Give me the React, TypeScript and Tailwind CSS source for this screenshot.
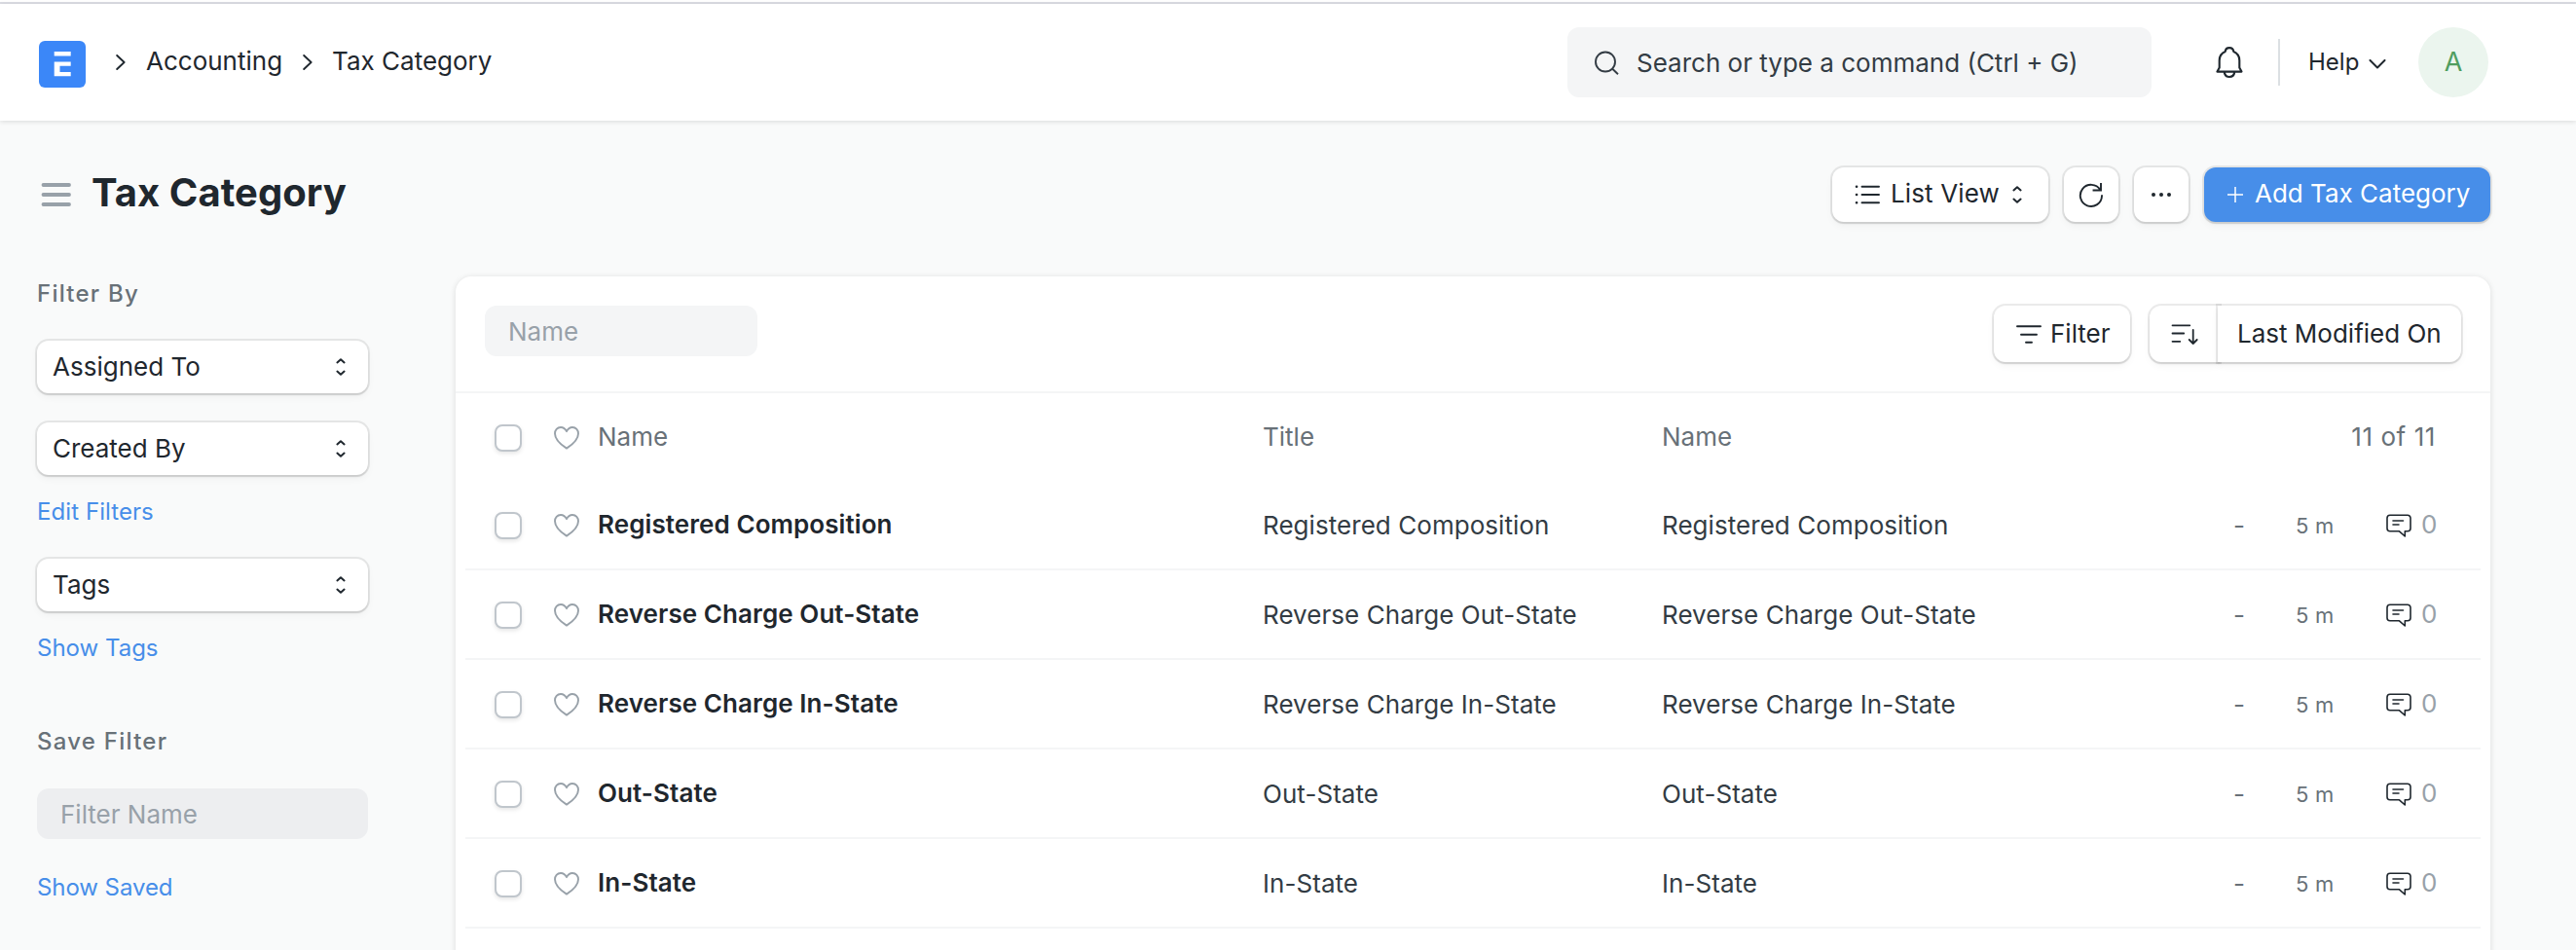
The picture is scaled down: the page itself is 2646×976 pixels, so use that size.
import React from "react";

const ring = "shadow-[0_0_0_2px_rgba(0,0,0,0.08),0_2px_2px_rgba(0,0,0,0.09),0_4px_8px_rgba(0,0,0,0.04)]";

function UpDown() {
  return (
    <svg width="32" height="32" viewBox="0 0 16 16" fill="none" stroke="#1f272e" strokeLinecap="round" strokeLinejoin="round">
      <path d="M6.2 5.700 8 4.100l1.800 1.600M6.200 10.300 8 11.900l1.800-1.600" />
    </svg>
  );
}

function Chevron() {
  return (
    <svg width="10" height="16" viewBox="0 0 10 16" fill="none" stroke="#1f272e" strokeWidth="1.900" strokeLinecap="round" strokeLinejoin="round">
      <path d="m1.200 1 7.400 7-7.400 7" />
    </svg>
  );
}

function Heart() {
  return (
    <svg className="mt-0.5" width="28" height="26" viewBox="0 0 28 26" fill="none" stroke="#98a1a9" strokeWidth="1.900" strokeLinejoin="round">
      <path d="M14 6.200C12.600 3.400 10.600 2 8 2 4.400 2 2 4.700 2 8.400c0 6.600 5.600 11 12 15.200 6.400-4.200 12-8.600 12-15.200C26 4.700 23.600 2 20 2c-2.600 0-4.600 1.400-6 4.200Z" />
    </svg>
  );
}

function Comment() {
  return (
    <svg className="mt-0.5" width="28" height="26" viewBox="0 0 28 26" fill="none" stroke="#1f272e" strokeWidth="1.600" strokeLinecap="round" strokeLinejoin="round">
      <path d="M5 2.300h18a3 3 0 0 1 3 3v10.500a3 3 0 0 1-3 3h-2.700v5.200l-5.800-5.200H5a3 3 0 0 1-3-3V5.300a3 3 0 0 1 3-3Z" />
      <path d="M8 8h10.500M8 12h6" />
    </svg>
  );
}

function Check() {
  return <span className="mt-0.5 block size-7 rounded-lg border-2 border-[#c0c6cc] bg-white shadow-[0_2px_4px_rgba(0,0,0,0.1)]" />;
}

function Select({ label }: { label: string }) {
  return (
    <button className={"flex h-[54px] w-[340px] items-center justify-between rounded-xl bg-white pl-4 pr-3 text-[#1f272e] " + ring}>
      <span>{label}</span>
      <UpDown />
    </button>
  );
}

const rows = ["Registered Composition", "Reverse Charge Out-State", "Reverse Charge In-State", "Out-State", "In-State"];

export default function App() {
  return (
    <div className="flex h-[976px] w-[2646px] flex-col overflow-hidden bg-[#f9fafa] font-[Inter,sans-serif] text-[26px] leading-[36px] text-[#1f272e]">
      <div className="h-1 shrink-0 border-b-2 border-[#dcdde4] bg-white" />
      <header className="flex h-[120px] shrink-0 items-center bg-white pl-10 shadow-[0_1px_5px_rgba(0,0,0,0.13)]">
        <svg width="48" height="48" viewBox="0 0 48 48" className="mt-1">
          <rect width="48" height="48" rx="6" fill="#3b87f8" />
          <path fill="#fff" d="M15.700 11h17v4.600h-17zM15.700 21.400h17v4.300H21.500V32h11.200v4.200h-17z" />
        </svg>
        <nav className="-mt-px flex items-center">
          <span className="ml-[31px]"><Chevron /></span>
          <span className="-mt-0.5 ml-[21px]">Accounting</span>
          <span className="ml-[21px]"><Chevron /></span>
          <span className="-mt-0.5 ml-5">Tax Category</span>
        </nav>
        <div className="ml-auto flex h-[72px] w-[600px] items-center rounded-xl bg-[#f4f5f6] pl-7 text-[#333c44]">
          <svg width="25" height="25" viewBox="0 0 25 25" fill="none" stroke="#333c44" strokeWidth="1.900">
            <circle cx="11" cy="11.500" r="10" />
            <path d="m18 18.500 6 5.700" />
          </svg>
          <span className="ml-[18px] mt-px">Search or type a command (Ctrl + G)</span>
        </div>
        <svg className="ml-[66px]" width="28" height="34" viewBox="0 0 28 34" fill="none" stroke="#1f272e" strokeWidth="2.100" strokeLinejoin="round">
          <path d="M1.500 26.600h25l-2.200-4.100V15c0-4.500-2.500-7.500-6-9C18 3.200 16.500 2.100 14 2.100S10 3.200 9.700 6c-3.500 1.500-6 4.500-6 9v7.500ZM8.700 27c.5 3.500 2.500 5 5.300 5s4.800-1.500 5.300-5" />
        </svg>
        <div className="ml-9 h-12 w-0.5 bg-[#dce0e3]" />
        <span className="-mt-px ml-[29px] w-[51px] text-2xl">Help</span>
        <svg className="ml-[11px] mt-1" width="18" height="10" viewBox="0 0 18 10" fill="none" stroke="#1f272e" strokeWidth="2" strokeLinecap="round" strokeLinejoin="round">
          <path d="m1.500 1 7.500 7.500L16.500 1" />
        </svg>
        <div className="ml-[33px] mr-[90px] flex size-[72px] items-center justify-center rounded-full bg-[#ebf5ee] text-[27px] text-[#4f9d5f]">A</div>
      </header>

      <div className="flex h-40 shrink-0 items-center pb-2 pl-[42px] pr-[88px]">
        <svg width="31" height="24" viewBox="0 0 31 24" stroke="#98a1a9" strokeWidth="3.800" strokeLinecap="round">
          <path d="M2.500 2h26.500M2.500 12h26.500M2.500 22h26.500" />
        </svg>
        <h1 className="-mt-[5px] ml-[21px] text-[40px] font-bold leading-[48px] tracking-[0.001em]">Tax Category</h1>
        <div className="ml-auto flex gap-4">
          <button className={"flex h-14 w-[222px] items-center rounded-xl bg-white pl-[23px] pr-4 " + ring}>
            <svg width="26" height="22" viewBox="0 0 26 22" stroke="#1f272e" strokeWidth="1.900" strokeLinecap="round">
              <path d="M7.500 2.700H25M7.500 11H25M7.500 19.300H25" />
              <path strokeWidth="2.600" d="M2 2.700h.1M2 11h.1M2 19.300h.1" />
            </svg>
            <span className="-mt-0.5 ml-[11px] tracking-[0.005em]">List View</span>
            <span className="ml-auto"><UpDown /></span>
          </button>
          <button className={"flex size-14 items-center justify-center rounded-xl bg-white " + ring}>
            <svg width="26" height="28" viewBox="0 0 26 28" fill="none" stroke="#1f272e" strokeWidth="1.900" strokeLinecap="square">
              <path d="M24 15.200A11.100 11.100 0 1 1 22.300 9M15.500 9.500h7.500V3" />
            </svg>
          </button>
          <button className={"flex size-14 items-center justify-center rounded-xl bg-white " + ring}>
            <svg width="20" height="4" viewBox="0 0 20 4" fill="#1f272e">
              <circle cx="2" cy="2" r="2" /><circle cx="10" cy="2" r="2" /><circle cx="18" cy="2" r="2" />
            </svg>
          </button>
          <button className={"flex h-14 w-[294px] items-center rounded-xl bg-[#478ee9] pl-6 text-white " + ring}>
            <svg width="16" height="16" viewBox="0 0 16 16" stroke="#fff" strokeWidth="1.500"><path d="M8 0v16M0 8h16" /></svg>
            <span className="-mt-0.5 ml-3">Add Tax Category</span>
          </button>
        </div>
      </div>

      <div className="flex">
        <aside className="flex w-[468px] shrink-0 flex-col items-start pl-[38px] text-2xl leading-[34px]">
          <div className="mt-px font-medium tracking-[0.052em] text-[#687178]">Filter By</div>
          <div className="mt-[31px] flex flex-col gap-[30px] text-[26px]">
            <Select label="Assigned To" />
            <Select label="Created By" />
          </div>
          <a className="mt-[21px] tracking-[0.003em] text-[#478ee9]">Edit Filters</a>
          <div className="mt-[31px] text-[26px]"><Select label="Tags" /></div>
          <a className="mt-[21px] text-[#478ee9]">Show Tags</a>
          <div className="mt-[62px] font-medium tracking-[0.052em] text-[#687178]">Save Filter</div>
          <div className="mt-[31px] flex h-[52px] w-[340px] items-center rounded-xl bg-[#edeef0] pl-6 pt-0.5 text-[26px] text-[#98a1a9]">Filter Name</div>
          <a className="mt-[33px] tracking-[-0.003em] text-[#478ee9]">Show Saved</a>
        </aside>

        <main className="h-[720px] w-[2090px] rounded-t-2xl bg-white shadow-[0_1px_6px_rgba(0,0,0,0.12)]">
          <div className="flex h-[120px] items-start border-b-2 border-[#f4f5f6] px-[30px] pt-[30px]">
            <div className="flex h-[52px] w-[280px] items-center rounded-xl bg-[#f4f5f6] pl-6 pt-0.5 text-[#98a1a9]">Name</div>
            <button className={"ml-auto flex h-[58px] w-[140px] items-center rounded-xl bg-white pl-[23px] " + ring}>
              <svg width="26" height="20" viewBox="0 0 26 20" stroke="#1f272e" strokeWidth="1.900" strokeLinecap="round">
                <path d="M1 2.300h24M5 10.700h16M10 18.700h6" />
              </svg>
              <span className="ml-[9px]">Filter</span>
            </button>
            <div className="ml-5 flex">
              <button className={"flex h-[58px] w-[72px] items-center rounded-l-xl bg-white pl-[22px] " + ring}>
                <svg width="28" height="26" viewBox="0 0 28 26" fill="none" stroke="#1f272e" strokeWidth="1.800" strokeLinecap="round" strokeLinejoin="round">
                  <path d="M1.500 4.300h17.800M1.500 12.500h11.700M1.500 20.800h7.800M22.700 9v14M18.700 19l4 4 4-4" />
                </svg>
              </button>
              <button className={"-ml-0.5 flex h-[58px] w-[250px] items-center rounded-r-xl bg-white pl-5 " + ring}>Last Modified On</button>
            </div>
          </div>
          <div className="flex h-[90px] items-center pl-10 pr-14 text-[#687178]">
            <Check />
            <span className="ml-8"><Heart /></span>
            <span className="ml-[18px] w-[683px]">Name</span>
            <span className="w-[410px]">Title</span>
            <span>Name</span>
            <span className="ml-auto tracking-[0.022em]">11 of 11</span>
          </div>
          {rows.map((name) => (
            <div key={name} className="mx-2.5 flex h-[92px] items-center border-b-2 border-[#f4f5f6] pl-[30px] pr-11 text-[#333c44]">
              <Check />
              <span className="ml-8"><Heart /></span>
              <span className="ml-[18px] w-[683px] font-semibold tracking-[0.003em] text-[#1f272e]">{name}</span>
              <span className="mt-0.5 w-[410px] tracking-[0.002em]">{name}</span>
              <span className="mt-0.5 tracking-[0.002em]">{name}</span>
              <span className="ml-auto mr-[52px] mt-0.5 text-[26px] text-[#687178]">-</span>
              <span className="mr-[52px] mt-0.5 w-10 whitespace-nowrap text-[22px] tracking-[0.01em] text-[#687178]">5 m</span>
              <Comment />
              <span className="ml-[9px] w-[17px] text-[#98a1a9]">0</span>
            </div>
          ))}
        </main>
      </div>
    </div>
  );
}
